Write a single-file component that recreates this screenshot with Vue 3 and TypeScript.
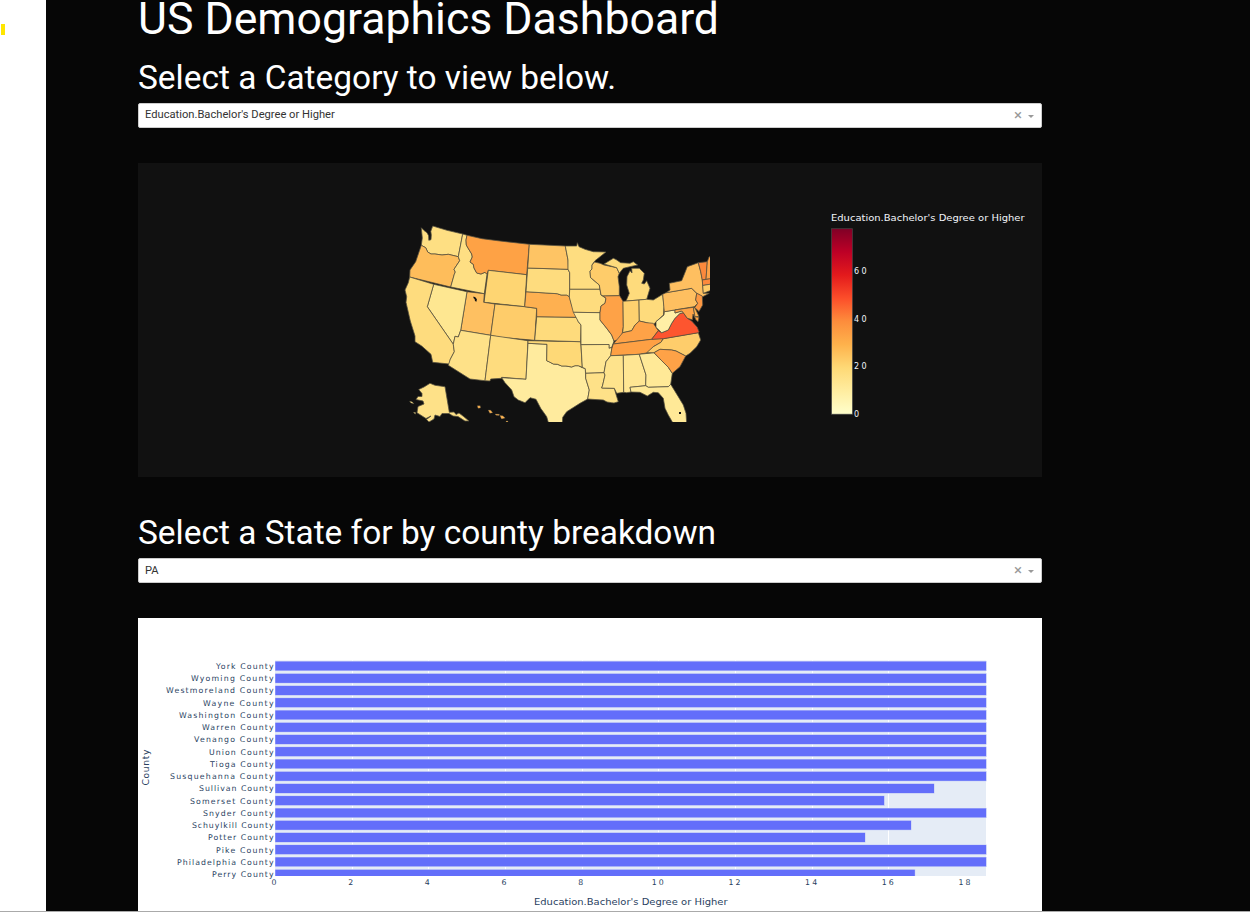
<script setup lang="ts">
interface Region { id: string; fill: string; points: string }
interface CountyBar { name: string; value: number; labelWidth: number }

const regions: Region[] = [
  { id: 'WA', fill: '#fedf83', points: '421.3,227.7 424,230.5 427,232.7 428.6,235.7 428.8,240.3 431,239.7 431.3,235 430.8,231.3 432.7,226 447,230.3 462.7,234 458.3,256.7 448.3,254.3 442,255 435,254 431,254 427.7,252 425.7,247.7 421.3,245.3 422.3,238' },
  { id: 'OR', fill: '#febd5b', points: '421.3,245.3 425.7,247.7 427.7,252 431,254 435,254 442,255 448.3,254.3 458.3,256.7 459.7,260.7 454,269.3 455.3,272 454.3,274.3 450.7,287 409.7,277 410,270 415.7,261.7 419,252' },
  { id: 'ID', fill: '#fedf83', points: '462.7,234 467,235.3 466,240 466.3,245 468,248 471.7,254 472.3,257 470,262 473.3,264.3 474,268 476.7,273 481,274 485,272.3 487,274.3 484.3,293.7 450.7,287 454.3,274.3 455.3,272 454,269.3 459.7,260.7 458.3,256.7' },
  { id: 'MT', fill: '#fea245', points: '467,235.3 482,238.7 500,241 529.3,244.3 526.7,274.7 488.3,270.3 487,274.3 485,272.3 481,274 476.7,273 474,268 473.3,264.3 470,262 472.3,257 471.7,254 468,248 466.3,245 466,240' },
  { id: 'WY', fill: '#fed572', points: '488.3,270.3 526.7,274.7 524.7,306.7 484,302.3' },
  { id: 'UT', fill: '#fec061', points: '467,291.7 484.3,293.7 483.7,302.3 495,304 490.7,335.3 460.7,330.3' },
  { id: 'CO', fill: '#fecc6a', points: '495,304 524.7,306.7 536.7,308.3 534.7,340.3 500,337.3 490.7,335.3' },
  { id: 'NV', fill: '#fee791', points: '433.7,284.3 467,291.7 460.7,330.3 458.3,337 455,336.3 453.3,344.3 427.3,306.7' },
  { id: 'CA', fill: '#fedc7e', points: '409.7,277 433.7,284.3 427.3,306.7 453.3,344.3 454.3,351.7 450.3,359.3 449.3,364 432.7,362.3 431,354.3 421.7,346 415,341.7 415,336 410.3,321 406,302.3 406.7,296.7 405,290 408.3,282.7' },
  { id: 'AZ', fill: '#fee188', points: '460.7,330.3 490.7,335.3 485,380.7 470,379 448.3,365.3 450.3,359.3 454.3,351.7 453.3,344.3 455,336.3 458.3,337' },
  { id: 'NM', fill: '#fedc7e', points: '490.7,335.3 528,340.7 526,379.3 501.7,377.3 501.7,378.3 490.7,379 490,381 485,380.7' },
  { id: 'TX', fill: '#ffeb9e', points: '528,343.3 547,344.3 546.7,360.7 549.5,362 553.3,364 557.5,364.3 561.7,366 566,366 571.7,367 575,365.7 578.3,365.7 582,367.5 585.3,368.7 585.7,378.3 589.3,390 587.7,399 580,403.3 566.7,411.7 562.7,417.3 562.3,424 548.8,424 546.7,416.7 540.7,408.3 536,399.3 530,397.7 525,402.7 518.3,400 514,396.7 511.7,390 505,382.7 501.7,377.7 526,379.3' },
  { id: 'OK', fill: '#fed977', points: '528,340.7 580.7,341.7 582.3,367.3 578.3,365.7 575,365.7 571.7,367 566,366 561.7,366 557.5,364.3 553.3,364 549.5,362 546.7,360.7 547,344.3 528,343.3' },
  { id: 'KS', fill: '#fedb7c', points: '536.7,316.7 576.7,317.3 578.3,321.7 581,325 580.7,341.7 534.7,340.3' },
  { id: 'NE', fill: '#feb050', points: '526,291.7 557.3,293.7 561,295 566.7,295 569.3,296.7 571.7,305 576.5,317.3 536.7,316.7 536.7,308.3 524.7,306.7' },
  { id: 'SD', fill: '#fedc7e', points: '527.7,268 568,269.3 569.7,272.7 569.7,289.3 569.3,296.7 566.7,295 561,295 557.3,293.7 526,291.7' },
  { id: 'ND', fill: '#fec464', points: '529.3,244.3 565.3,246 568,260 568.3,269.3 527.7,268' },
  { id: 'MN', fill: '#fedd80', points: '565.3,246 576.7,246 577.3,242.7 579,246.7 585,249.3 593.3,251.7 606,252 595,260.7 592,265 592,269 590,271 590.5,277.5 599.3,285 600,289.3 569.7,289.3 569.7,272.7 568,269.3 568,260' },
  { id: 'IA', fill: '#fedc7e', points: '569.7,289.3 600,289.3 601,295 606,298.3 605,303.3 601,306 600,312.7 573.3,312.3 569.3,297' },
  { id: 'MO', fill: '#ffeb9e', points: '573.3,312.3 600,312.7 600,320 606.7,328.3 611.7,335 614,341 611.7,347.3 609,348.3 609,344.5 581,344.7 581,325 578.3,321.7' },
  { id: 'AR', fill: '#ffe693', points: '581,344.7 609,344.5 609,348.3 612,347.3 610.7,355.7 606,361.7 604,372.7 585.7,373.3 585.3,368.7 582.3,367.3' },
  { id: 'LA', fill: '#fee188', points: '585.7,373.3 604,372.7 605,375 602.7,385 601.7,388 614.3,388.3 615.7,393.3 618.3,401.7 614,403 611.7,402.7 607,402 603.3,400 595,399.5 587.7,399 589.3,390 585.7,378.3' },
  { id: 'WI', fill: '#fecc6a', points: '594.5,262 600,263.3 604,265 616.7,267.7 619.3,273.3 618,276.7 619.3,286.7 619.3,295.7 603.3,296 601,295 599.3,285 590.5,277.5 590,271 592,269 592,265' },
  { id: 'MI-N', fill: '#fedb7c', points: '604,264 613.3,258.3 616,259.5 620.7,262.7 630,263.3 633.3,261.7 637.7,265 630,266.7 623.3,268.3 619.3,273.3 616.7,267.7' },
  { id: 'MI-S', fill: '#fedb7c', points: '626,301 629.3,293.3 626.7,285 627,276.7 630,270.7 632,273 631.7,268.3 639.3,268.3 644.3,273.3 643.3,280 641.7,283.3 644.3,284 646.7,280.7 650,288.3 646.7,299.3 639,300' },
  { id: 'IL', fill: '#fea247', points: '603.3,296 619.7,295.7 623,301.3 623.3,326.7 621.7,336.7 617.3,340 614,341 611.7,335 606.7,328.3 600,320 600,312.7 601,306 605,303.3 606,298.3' },
  { id: 'IN', fill: '#fed16f', points: '623,301.3 639,300 639.3,321 635,325 631.7,330.7 622.7,332.7 623.3,326.7' },
  { id: 'OH', fill: '#fedb7c', points: '639,300 646.7,299.3 653.3,300 662.7,294.3 664,306.7 663.5,315 656,321.7 653.3,325 646.7,322.7 639.3,321' },
  { id: 'KY', fill: '#fea247', points: '613.3,344 617.3,339.3 622.7,332.7 631.7,330.7 635,325 639.3,321 646.7,322.7 653.3,323.3 658.3,330.7 651.7,339.3' },
  { id: 'TN', fill: '#fea044', points: '613.3,344 651.7,339.3 663.3,338.3 661,342.3 653.3,346.7 647.7,352.7 639,354.3 610.7,355.7 611.7,349' },
  { id: 'MS', fill: '#fee38c', points: '610.7,355.7 623.3,355.3 623.7,392.3 616.7,393.3 614.3,388.3 601.7,388 602.7,385 605,375 604,372.7 606,361.7' },
  { id: 'AL', fill: '#ffe693', points: '623.3,355.3 639.3,354.3 646,375 645.7,385.7 630,387.3 631,392 626.7,392.7 623.7,392.3' },
  { id: 'GA', fill: '#ffe997', points: '639.3,354.3 654,352.7 661.7,360.7 668.3,367.3 672.3,373.3 670.7,384.3 668.3,386.7 648.3,387.3 645.7,385.7 646,375' },
  { id: 'FL', fill: '#ffe997', points: '630,387.3 645.7,385.7 648.3,387.3 668.3,386.7 670.7,384.3 678.3,396.7 683.3,405 686,413.3 686.7,424 673.5,424 668.3,415 665,408.3 663.3,398.3 658.3,392.7 653.3,392.3 647.3,396 640,392.3 631,392' },
  { id: 'NC', fill: '#fecd6b', points: '663.3,338.7 698.3,332.7 700.7,340 696.7,346.7 690,353.3 685.7,356 676,351 671.7,350 660,349.3 654,352.7 646.7,352.7 653.3,346.7 661,342.3' },
  { id: 'SC', fill: '#fea247', points: '654,352.7 660,349.3 671.7,350 676,351 685.7,356 680,366.7 672.3,373.3 668.3,367.3 661.7,360.7' },
  { id: 'VA', fill: '#fd552f', points: '651.7,339.3 658.3,330.7 661.7,332.7 668.3,330 671.7,323.3 675,318.3 680,313.3 683.3,312.7 687.3,318.3 691.7,321 697.3,327.3 699,331.7 698.3,332.7 663.3,338.7' },
  { id: 'WV', fill: '#ffefa6', points: '664.3,311.7 675,309.9 675,313 681.7,311 683.3,312.7 680,313.3 675,318.3 671.7,323.3 668.3,330 661.7,332.7 656,327.3 656,321.7 664,315' },
  { id: 'PA', fill: '#febf60', points: '662.7,294.3 666,292.7 691.7,288.3 696.7,293.3 695.7,300 697.7,303.3 694.3,306.7 664.3,311.7' },
  { id: 'NY', fill: '#febf60', points: '666,292.7 670,290 669.3,283.3 681.7,280.7 684,275 687.3,266.7 698.3,262.7 700.7,271.7 702.3,280 703.3,293.3 709.3,293.3 702.7,296.7 696.7,293.3 691.7,288.3' },
  { id: 'NJ', fill: '#fe9842', points: '696.7,293.3 702.3,296 702.7,305 699,311.5 694.7,307.5 697.7,303.3 695.7,300' },
  { id: 'MD', fill: '#fea447', points: '675,309.9 693.3,307.3 695,316.7 699,317.3 698,321.7 696,320 693,314 692.5,319.8 687.3,318.3 683.3,312.7 681.7,311 675,313' },
  { id: 'DE', fill: '#feb351', points: '693.3,307.3 695,308 699,316.5 695,316.7' },
  { id: 'VT', fill: '#fc893c', points: '698.3,262.7 707.3,261.7 706.7,270 706,279.3 702.3,280 700.7,271.7' },
  { id: 'NH', fill: '#fea247', points: '707.3,261.7 709,257 713,255 713,278.7 706,279.3 706.7,270' },
  { id: 'MA', fill: '#fc893c', points: '702.3,280 713,278.3 713,283.8 702.7,285.5' },
  { id: 'CT', fill: '#fecc6a', points: '702.7,285.5 713,283.8 713,289.5 703.3,293.3' },
  { id: 'AK', fill: '#fee188', points: '430,383.3 435,385.3 445,386.7 449.3,412.3 454,412 456,414.5 459,413 463.3,416.3 469,421 465,421 458,416.5 453,416 449,413.5 442,413.5 440,416.5 435,415 434,419 429,422 426.5,419.5 431,416 426,418.5 417,412.7 418,406.5 424,404 423,401 416,399.5 418,396.5 422,396.5 422,393.5 418.7,389.5 424,387' },
]

const islands: Region[] = [
  { id: 'AK-W1', fill: '#fee188', points: '409.5,401.2 412,401.7 414,403.8 411,403' },
  { id: 'AK-W2', fill: '#fee188', points: '413.3,412.3 415.7,412.5 415.3,414.2' },
  { id: 'HI-1', fill: '#feb351', points: '477.3,405.7 480.2,405.7 480.5,408 478,408.3' },
  { id: 'HI-2', fill: '#feb351', points: '488.2,410 490.7,410.2 492.7,412.7 489.8,413.3' },
  { id: 'HI-3', fill: '#feb351', points: '495,413.9 499.5,414.3 499,415.6 496,415.2' },
  { id: 'HI-4', fill: '#feb351', points: '499.8,415.5 502.7,415.8 505.2,418 501.6,419' },
  { id: 'HI-5', fill: '#feb351', points: '506,421 508,421 508,422 506,422' },
]

const colorTicks = [60, 40, 20, 0]

const counties: CountyBar[] = [
  { name: 'York County', value: 18.56, labelWidth: 57.5 },
  { name: 'Wyoming County', value: 18.56, labelWidth: 82.5 },
  { name: 'Westmoreland County', value: 18.56, labelWidth: 107.5 },
  { name: 'Wayne County', value: 18.56, labelWidth: 70.5 },
  { name: 'Washington County', value: 18.56, labelWidth: 94.5 },
  { name: 'Warren County', value: 18.56, labelWidth: 71.5 },
  { name: 'Venango County', value: 18.56, labelWidth: 79.5 },
  { name: 'Union County', value: 18.56, labelWidth: 64.5 },
  { name: 'Tioga County', value: 18.56, labelWidth: 63.5 },
  { name: 'Susquehanna County', value: 18.56, labelWidth: 103.5 },
  { name: 'Sullivan County', value: 17.2, labelWidth: 74.5 },
  { name: 'Somerset County', value: 15.9, labelWidth: 83.5 },
  { name: 'Snyder County', value: 18.56, labelWidth: 70.5 },
  { name: 'Schuylkill County', value: 16.6, labelWidth: 81.5 },
  { name: 'Potter County', value: 15.4, labelWidth: 65.5 },
  { name: 'Pike County', value: 18.56, labelWidth: 57.5 },
  { name: 'Philadelphia County', value: 18.56, labelWidth: 96.5 },
  { name: 'Perry County', value: 16.7, labelWidth: 61.5 },
]

const xTicks = [0, 2, 4, 6, 8, 10, 12, 14, 16, 18]
const gridTicks = xTicks.slice(1, -1)
const plotLeft = 137
const unit = 38.33
const rowStep = 12.245
const barX = (v: number) => plotLeft + v * unit
const rowY = (i: number) => 48 + i * rowStep
</script>

<template>
  <div class="page">
    <aside class="gutter"><span class="marker"></span></aside>
    <main class="board">
      <h1 class="title">US Demographics Dashboard</h1>
      <h2 class="heading">Select a Category to view below.</h2>
      <div class="select">
        <span class="value">Education.Bachelor's Degree or Higher</span>
        <span class="clear">×</span>
        <span class="arrow"></span>
      </div>

      <svg class="map" viewBox="138 163 904 314" width="904" height="314">
        <defs>
          <linearGradient id="scale" x1="0" y1="1" x2="0" y2="0">
            <stop offset="0" stop-color="#ffffcc" />
            <stop offset="0.125" stop-color="#ffeda0" />
            <stop offset="0.25" stop-color="#fed976" />
            <stop offset="0.375" stop-color="#feb24c" />
            <stop offset="0.5" stop-color="#fd8d3c" />
            <stop offset="0.625" stop-color="#fc4e2a" />
            <stop offset="0.75" stop-color="#e31a1c" />
            <stop offset="0.875" stop-color="#bd0026" />
            <stop offset="1" stop-color="#800026" />
          </linearGradient>
          <clipPath id="frame"><rect x="400" y="218" width="310" height="204" /></clipPath>
        </defs>
        <g clip-path="url(#frame)">
          <polygon v-for="r in regions" :key="r.id" :points="r.points" :fill="r.fill" class="state" />
          <polygon v-for="r in islands" :key="r.id" :points="r.points" :fill="r.fill" class="island" />
          <path class="lake" d="M473.5 296.5l1.8.8 1.6 2-.5 2.5-1.4-.7-.4-2.2-1.2-.8z" />
          <path class="lake" d="M679 412h2v2h-2z" />
        </g>
        <text class="legend-title" x="831" y="221" textLength="193.5" lengthAdjust="spacingAndGlyphs">Education.Bachelor's Degree or Higher</text>
        <rect x="831.5" y="228.7" width="21" height="185.5" fill="url(#scale)" stroke="#444" stroke-width="0.7" />
        <text
          v-for="t in colorTicks" :key="t" class="legend-tick" x="854" :y="417 - t * 2.378"
          :textLength="t ? 12.5 : 5.5"
        >{{ t }}</text>
      </svg>

      <h2 class="heading second">Select a State for by county breakdown</h2>
      <div class="select lower">
        <span class="value">PA</span>
        <span class="clear">×</span>
        <span class="arrow"></span>
      </div>

      <svg class="bars" viewBox="0 0 904 293" width="904" height="293">
        <clipPath id="plot"><rect x="137" y="42" width="712" height="216" /></clipPath>
        <rect x="137" y="42.5" width="711" height="215.5" fill="#e5ecf6" />
        <g clip-path="url(#plot)">
          <rect v-for="t in gridTicks" :key="t" :x="Math.round(barX(t))" y="42" width="1" height="216" fill="#fff" />
          <rect
            v-for="(c, i) in counties" :key="c.name" class="bar" :x="plotLeft" :y="rowY(i) - 4.9"
            :width="c.value * unit" height="9.8"
          />
        </g>
        <text
          v-for="(c, i) in counties" :key="c.name" class="tick" :x="135.5 - c.labelWidth"
          :y="Math.round(rowY(i) + 3)" :textLength="c.labelWidth"
        >{{ c.name }}</text>
        <text
          v-for="t in xTicks" :key="t" class="tick" :x="barX(t) - (t > 9 ? 6.5 : 3.5)" y="267"
          :textLength="t > 9 ? 12 : 5.5"
        >{{ t }}</text>
        <text class="axis" x="396" y="287" textLength="193.5" lengthAdjust="spacingAndGlyphs">Education.Bachelor's Degree or Higher</text>
        <text class="axis" transform="translate(11 167.5) rotate(-90)" textLength="36">County</text>
      </svg>
    </main>
  </div>
</template>

<style>
html,
body {
  margin: 0;
  overflow: hidden;
  background: #060606;
}
</style>

<style scoped>
.page {
  display: flex;
  width: 1250px;
  height: 912px;
  overflow: hidden;
  font-family: Roboto, "Liberation Sans", sans-serif;
  box-sizing: border-box;
  background: #060606;
  border-bottom: 1px solid #aaa;
}
.gutter {
  width: 46px;
  padding-top: 24px;
  box-sizing: border-box;
  background: #fff;
}
.marker {
  display: block;
  width: 4px;
  height: 11px;
  margin-left: 1px;
  background: #ffe600;
}
.board {
  width: 904px;
  margin-left: 92px;
  color: #fff;
}
.title,
.heading {
  margin: 0;
  font-weight: 400;
  white-space: nowrap;
}
.title {
  height: 46px;
  font-size: 44.6px;
  line-height: 38px;
}
.heading {
  height: 40px;
  margin-top: 11px;
  margin-bottom: 6px;
  font-size: 33.45px;
  line-height: 42px;
}
.heading.second {
  margin-top: 35px;
}
.select {
  display: flex;
  align-items: center;
  box-sizing: border-box;
  height: 25px;
  padding: 0 7px 0 6px;
  border: 1px solid #ccc;
  border-radius: 2px;
  background: #fff;
  color: #333;
}
.value {
  flex: 1;
  font-size: 11.17px;
  line-height: 22px;
  padding-bottom: 1px;
}
.lower .value {
  padding-top: 1px;
  padding-bottom: 0;
}
.clear {
  margin-right: 6px;
  color: #999;
  font-size: 15px;
  line-height: 20px;
  padding-bottom: 2px;
}
.arrow {
  border: 3px solid transparent;
  border-top-color: #999;
  border-bottom: 0;
  margin-top: 2px;
}
.map,
.bars {
  display: block;
  margin-top: 35px;
  font-family: "DejaVu Sans", sans-serif;
}
.map {
  background: #111;
}
.bars {
  background: #fff;
}
.state {
  stroke: #55503f;
  stroke-width: 0.75;
  stroke-linejoin: round;
}
.island {
  stroke: #55503f;
  stroke-width: 0.3;
}
.lake {
  fill: #111;
}
.legend-title {
  fill: #f2f5fa;
  font-size: 9.2px;
}
.legend-tick {
  fill: #f2f5fa;
  font-size: 8px;
}
.bar {
  fill: #636efa;
  stroke: #e5ecf6;
  stroke-width: 0.5;
}
.tick {
  fill: #2a3f5f;
  font-size: 7.8px;
}
.axis {
  fill: #2a3f5f;
  font-size: 9.2px;
}
</style>
